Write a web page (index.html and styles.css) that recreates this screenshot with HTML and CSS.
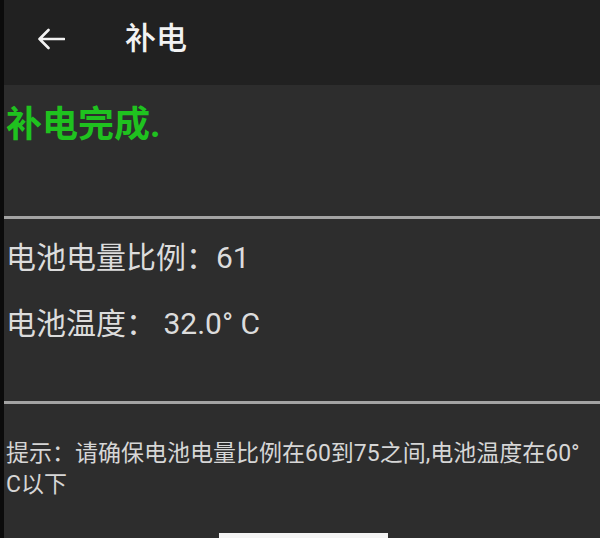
FILE: index.html
```html
<!DOCTYPE html>
<html lang="zh-CN">
<head>
<meta charset="utf-8">
<title>补电</title>
<link rel="stylesheet" href="styles.css">
</head>
<body>
<div class="screen">
  <header class="appbar">
    <svg class="back" viewBox="0 0 28 22" width="28" height="22" aria-hidden="true">
      <path d="M27 11H2.5M11.5 2L2.5 11L11.5 20" fill="none" stroke="#f2f2f2" stroke-width="2.6" stroke-linecap="round" stroke-linejoin="round"/>
    </svg>
    <h1 class="title">补电</h1>
  </header>
  <main class="content">
    <div class="status">补电完成.</div>
    <hr class="divider divider-top">
    <div class="stats">
      <div class="stat">电池电量比例：61</div>
      <div class="stat">电池温度： 32.0° C</div>
    </div>
    <hr class="divider divider-bottom">
    <p class="hint">提示：请确保电池电量比例在60到75之间,电池温度在60°<wbr>C以下</p>
    <div class="action"><div class="button"></div></div>
  </main>
</div>
</body>
</html>
```
FILE: styles.css
```css
html, body {
  margin: 0;
  padding: 0;
  background: #2d2d2d;
}
body {
  width: 600px;
  height: 538px;
  overflow: hidden;
  font-family: Roboto, "Noto Sans CJK SC", sans-serif;
}
.screen {
  border-left: 4px solid #0b0b0b;
  height: 538px;
  box-sizing: border-box;
  display: flex;
  flex-direction: column;
  overflow: hidden;
}
.appbar {
  height: 85px;
  box-sizing: border-box;
  padding: 0 0 7px 33px;
  background: #212121;
  display: flex;
  align-items: center;
  flex-shrink: 0;
}
.back {
  display: block;
  flex-shrink: 0;
}
.title {
  margin: 0 0 0 60px;
  font-size: 31px;
  font-weight: 500;
  line-height: 40px;
  color: #f2f2f2;
}
.content {
  flex: 1;
  min-height: 0;
  overflow: hidden;
  padding: 0 0 0 2px;
  display: flex;
  flex-direction: column;
}
.status {
  margin-top: 18px;
  font-size: 36px;
  line-height: 44px;
  font-weight: 700;
  color: #1fc21f;
}
.divider {
  margin: 0 0 0 -2px;
  border: 0;
  height: 3px;
  background: #a3a3a3;
  flex-shrink: 0;
}
.divider-top {
  margin-top: 69px;
}
.stats {
  margin-top: 19px;
  display: flex;
  flex-direction: column;
  gap: 26px;
}
.stat {
  font-size: 30px;
  line-height: 40px;
  color: #dcdcdc;
}
.divider-bottom {
  margin-top: 57px;
}
.hint {
  margin: 34px 0 0 0;
  padding-right: 10px;
  font-size: 23px;
  line-height: 31px;
  color: #d6d6d6;
}
.action {
  margin-top: 33px;
  display: flex;
  justify-content: center;
  flex-shrink: 0;
}
.button {
  width: 169px;
  height: 40px;
  background: #f4f4f4;
  flex-shrink: 0;
}
```
